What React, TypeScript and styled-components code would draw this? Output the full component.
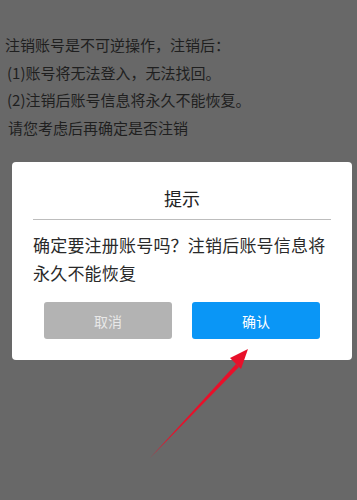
import React from "react";
import styled, { createGlobalStyle } from "styled-components";

const GlobalStyle = createGlobalStyle`
  html, body {
    margin: 0;
    padding: 0;
    background: #686868;
  }
  body {
    font-family: "Noto Sans CJK SC", "Noto Sans", sans-serif;
  }
`;

const Page = styled.div`
  position: relative;
  width: 357px;
  height: 500px;
  overflow: hidden;
  background: #686868;
  padding-top: 31px;
  box-sizing: border-box;
`;

const Notice = styled.div`
  padding-left: 5px;
  color: #1f1f1f;
  font-size: 15px;
  line-height: 27.5px;
`;

const NoticeLine = styled.div<{ $indent?: number }>`
  padding-left: ${(p) => p.$indent ?? 0}px;
  white-space: nowrap;
`;

const Dialog = styled.div`
  margin: 21px 0 0 12px;
  width: 340px;
  background: #ffffff;
  border-radius: 4px;
  padding: 0 21px 21px;
  box-sizing: border-box;
`;

const Title = styled.div`
  height: 58px;
  display: flex;
  align-items: center;
  justify-content: center;
  padding-top: 14px;
  box-sizing: border-box;
  font-size: 18px;
  color: #222;
  border-bottom: 1px solid #bdbdbd;
`;

const Message = styled.div`
  padding: 11px 0 0;
  font-size: 17px;
  line-height: 28px;
  color: #2a2a2a;
  letter-spacing: 0.2px;
`;

const Actions = styled.div`
  display: flex;
  justify-content: space-between;
  padding: 15px 11px 0;
`;

const Button = styled.div<{ $primary?: boolean }>`
  width: 128px;
  height: 37px;
  border-radius: 3px;
  display: flex;
  align-items: center;
  justify-content: center;
  font-size: 14px;
  background: ${(p) => (p.$primary ? "#0a96f6" : "#b3b3b3")};
  color: ${(p) => (p.$primary ? "#ffffff" : "#e8e8e8")};
`;

const Arrow = styled.svg`
  position: absolute;
  left: 0;
  top: 0;
  pointer-events: none;
`;

export default function App() {
  return (
    <>
      <GlobalStyle />
      <Page>
        <Notice>
          <NoticeLine>注销账号是不可逆操作，注销后：</NoticeLine>
          <NoticeLine $indent={2}>(1)账号将无法登入，无法找回。</NoticeLine>
          <NoticeLine $indent={2}>(2)注销后账号信息将永久不能恢复。</NoticeLine>
          <NoticeLine $indent={3}>请您考虑后再确定是否注销</NoticeLine>
        </Notice>
        <Dialog>
          <Title>提示</Title>
          <Message>确定要注册账号吗？注销后账号信息将永久不能恢复</Message>
          <Actions>
            <Button>取消</Button>
            <Button $primary>确认</Button>
          </Actions>
        </Dialog>
        <Arrow width="357" height="500" viewBox="0 0 357 500">
          <polygon points="150,458 236,364 239,367" fill="#e8102a" />
          <polygon points="248,349 230,358 241,369" fill="#e8102a" />
        </Arrow>
      </Page>
    </>
  );
}
